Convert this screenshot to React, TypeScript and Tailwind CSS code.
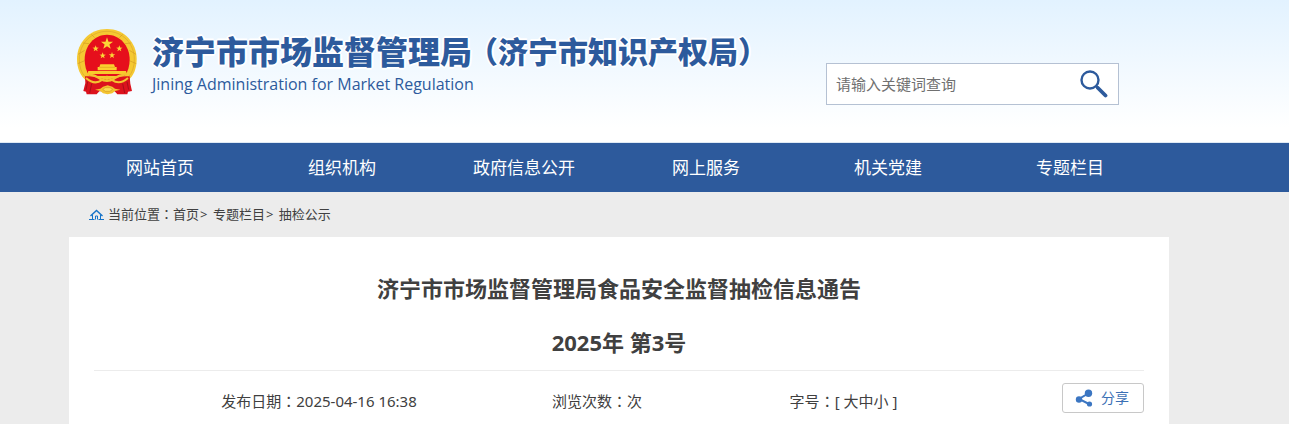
import React from "react";

const navItems = ["网站首页", "组织机构", "政府信息公开", "网上服务", "机关党建", "专题栏目"];

const sansFont = "font-['Noto_Sans','Noto_Sans_CJK_SC',sans-serif]";

function Container({ children, className = "" }: { children: React.ReactNode; className?: string }) {
    return (
        <div className="pr-[51px]">
            <div className={`mx-auto max-w-[1100px] ${className}`}>{children}</div>
        </div>
    );
}

// Full-width colon centred in its cell
function Colon() {
    return (
        <span lang="zh-TW" className="font-['Noto_Sans_CJK_TC',sans-serif]">
            ：
        </span>
    );
}

function Star({ x, y, r }: { x: number; y: number; r: number }) {
    const points = Array.from({ length: 10 }, (_, i) => {
        const radius = i % 2 === 0 ? r : r * 0.4;
        const angle = (Math.PI / 5) * i - Math.PI / 2;
        return `${(x + radius * Math.cos(angle)).toFixed(1)},${(y + radius * Math.sin(angle)).toFixed(1)}`;
    }).join(" ");
    return <polygon points={points} fill="#fbd537" />;
}

function Emblem() {
    return (
        <svg viewBox="45 39 186 204" className="h-[68px] w-[62px] shrink-0" aria-hidden="true">
            {/* Wheat ring */}
            <path d="M138 42C86 42 48 82 48 132c0 29 10 51 28 65l62 14 62-14c18-14 27-36 27-65 0-50-38-90-89-90z" fill="#f5c932" />
            <path d="M138 49C91 49 55 86 55 133c0 22 6 39 16 51M138 49c47 0 82 37 82 84 0 22-6 39-16 51" fill="none" stroke="#dba62a" strokeWidth="2" />
            <path d="M50 146l21-9M51 118l20-12M66 84l18 2M91 58l10 10M226 146l-21-9M225 118l-20-12M210 84l-18 2M185 58l-10 10" stroke="#d39a22" strokeWidth="2" />
            {/* Red field */}
            <path d="M138 59c-38 0-67 33-67 74 0 20 5 37 14 50h106c10-13 15-30 15-50 0-41-30-74-68-74z" fill="#e60f1c" />
            {/* Ribbon */}
            <path d="M72 184c22-2 44 4 66 11 23-7 45-13 68-11l2 22 5 22-12 2-2 8-30 0-8-9h-46l-8 9H77l-2-8-8-2 6-24z" fill="#dc121d" />
            <path d="M92 206l-6 28M185 206l6 28M80 200l-5 24M198 200l5 24" stroke="#a80f19" strokeWidth="3" />
            {/* Gate tower */}
            <path d="M118 148h41l3 8h5v10H110v-10h5z" fill="#fbd02e" />
            <path d="M115 157h47" stroke="#dda01f" strokeWidth="2" />
            <path d="M82 168h113l3 9H79z" fill="#f8cb2d" />
            <path d="M80 178c18 1 26 5 37 13 14 9 28 9 42 0 11-8 20-12 38-13" fill="none" stroke="#f3c330" strokeWidth="7" />
            <path d="M75 189c17 15 35 16 48 6l15-10 15 10c14 10 31 9 48-6" fill="none" stroke="#f3c330" strokeWidth="6" />
            {/* Gear */}
            <path d="M126 215l14-4 14 4 8 6 16 3-16 4-8 7-14 3-14-3-8-7-16-4 16-3z" fill="#f3c330" />
            <path d="M125 223l8-5h14l8 5-8 6h-14z" fill="#fbdc54" stroke="#d39a22" strokeWidth="2" />
            <Star x={138} y={86} r={19} />
            <Star x={104} y={101} r={10} />
            <Star x={175} y={101} r={10} />
            <Star x={125} y={122} r={10} />
            <Star x={153} y={121} r={10} />
        </svg>
    );
}

export default function App() {
    return (
        <div className={`bg-[#ececec] text-[#404040] ${sansFont}`} lang="zh-CN">
            {/* Header */}
            <header className="border-b border-[#dfeaf5] bg-linear-to-b from-[#e2f2ff] to-white to-90%">
                <Container className="flex h-[142px] items-start justify-between pl-[7px] pr-[50px]">
                    <a href="#" className="flex items-start pt-7 text-[#2d5a9c]">
                        <Emblem />
                        <div className="ml-[14px]">
                            <h1 className="flex items-center whitespace-nowrap font-black leading-[48px] [text-shadow:2px_0_#fff,-2px_0_#fff,0_2px_#fff,0_-2px_#fff,1px_1px_1px_#fff,-1px_-1px_1px_#fff]">
                                <span className="text-[32px]">济宁市市场监督管理局</span>
                                <span className="-ml-1 text-[30px]">（济宁市知识产权局）</span>
                            </h1>
                            <p className="font-['Open_Sans',sans-serif] text-base leading-4">Jining Administration for Market Regulation</p>
                        </div>
                    </a>
                    <form className="mt-[63px] flex h-[42px] w-[293px] items-center border border-[#b5c1d3] bg-white" onSubmit={(e) => e.preventDefault()}>
                        <input
                            type="text"
                            aria-label="请输入关键词查询"
                            placeholder="请输入关键词查询"
                            className="h-10 w-0 flex-1 px-[9px] text-[15px] outline-none placeholder:text-[#707070]"
                        />
                        <button type="submit" aria-label="搜索" className="mr-[10px]">
                            <svg viewBox="0 0 28 28" className="size-7" fill="none" stroke="#2d5a9c">
                                <circle cx="10" cy="10" r="8.5" strokeWidth="2.4" />
                                <path d="M16 16l2 2" strokeWidth="2.5" />
                                <path d="M18 18l7.5 7.5" strokeWidth="3.8" strokeLinecap="round" />
                            </svg>
                        </button>
                    </form>
                </Container>
            </header>

            {/* Navigation */}
            <nav className="bg-[#2d5a9c]">
                <Container className="flex pr-2">
                    {navItems.map((item) => (
                        <a key={item} href="#" className="flex-1 text-center text-[17px] leading-[49px] text-white">
                            {item}
                        </a>
                    ))}
                </Container>
            </nav>

            {/* Breadcrumb */}
            <Container className="flex h-[45px] items-center pl-5 text-[13px]">
                <svg viewBox="0 0 15 12" className="mr-1 h-3 w-[15px]" fill="none" stroke="#1673c8">
                    <path d="M1.5 7L7.5 1.5 13.5 7" strokeWidth="1.4" />
                    <path d="M3.5 6v4.5M11.5 6v4.5M0 10.5h5.5M9.5 10.5H15M6.5 10.5V7h2v3.5" />
                </svg>
                <span>
                    当前位置
                    <Colon />
                    <a href="#">首页</a>
                    <span className="ml-px mr-0.5">&gt;</span> <a href="#">专题栏目</a>
                    <span className="ml-px mr-0.5">&gt;</span> <a href="#">抽检公示</a>
                </span>
            </Container>

            {/* Article */}
            <Container>
                <main className="bg-white px-[25px] pt-6">
                    <h2 className="border-b border-[#ececec] pb-px text-center text-[22px] font-bold leading-[54px]">
                        济宁市市场监督管理局食品安全监督抽检信息通告
                        <br />
                        2025年 第3号
                    </h2>
                    <div className="grid grid-cols-[450fr_106fr_387fr_107fr] pb-3 pt-3 text-center text-[15px] leading-9">
                        <span>
                            发布日期
                            <Colon />
                            2025-04-16 16:38
                        </span>
                        <span className="whitespace-nowrap">
                            浏览次数
                            <Colon />次
                        </span>
                        <span>
                            字号
                            <Colon />[ <a href="#">大</a>
                            <a href="#">中</a>
                            <a href="#">小</a> ]
                        </span>
                        <button type="button" className="flex h-[30px] w-[82px] items-center justify-center gap-2 justify-self-end rounded-[3px] border border-[#c8c8c8] pr-0.5 text-sm text-[#3b70b5]">
                            <svg viewBox="0 0 18 18" className="size-[18px]" fill="#3b76c2" stroke="#3b76c2">
                                <path d="M14 4L4 10l10 5" fill="none" strokeWidth="2" />
                                <circle cx="13.5" cy="4.2" r="3.7" stroke="none" />
                                <circle cx="4" cy="10.5" r="3.2" stroke="none" />
                                <circle cx="14.5" cy="15" r="2.6" stroke="none" />
                            </svg>
                            分享
                        </button>
                    </div>
                </main>
            </Container>
        </div>
    );
}
